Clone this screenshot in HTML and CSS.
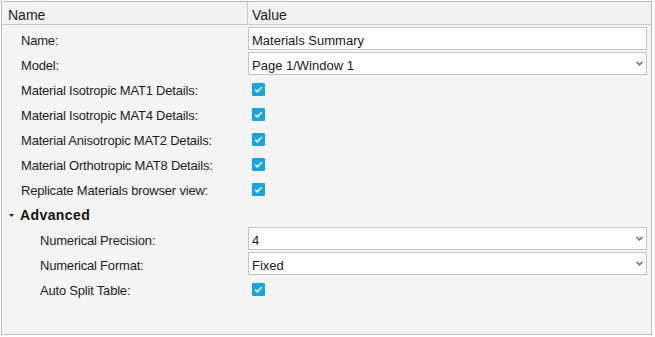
FILE: index.html
```html
<!DOCTYPE html>
<html>
<head>
<meta charset="utf-8">
<link rel="stylesheet" href="styles.css">
</head>
<body>
<div class="panel">
  <div class="head">
    <div class="hcell hname">Name</div>
    <div class="hcell hvalue">Value</div>
  </div>
  <div class="rows">
    <div class="row">
      <div class="label">Name:</div>
      <div class="val"><div class="field">Materials Summary</div></div>
    </div>
    <div class="row">
      <div class="label">Model:</div>
      <div class="val"><div class="field select"><span>Page 1/Window 1</span><svg class="arrow" width="7" height="5" viewBox="0 0 7 5"><polyline points="0.5,0.8 3.5,3.8 6.5,0.8" fill="none" stroke="#7a7a7a" stroke-width="1.8"/></svg></div></div>
    </div>
    <div class="row">
      <div class="label">Material Isotropic MAT1 Details:</div>
      <div class="val"><span class="check"><svg width="13" height="13" viewBox="0 0 13 13"><polyline points="3.2,6.8 5.3,8.8 9.8,4.3" fill="none" stroke="#fff" stroke-width="1.6"/></svg></span></div>
    </div>
    <div class="row">
      <div class="label">Material Isotropic MAT4 Details:</div>
      <div class="val"><span class="check"><svg width="13" height="13" viewBox="0 0 13 13"><polyline points="3.2,6.8 5.3,8.8 9.8,4.3" fill="none" stroke="#fff" stroke-width="1.6"/></svg></span></div>
    </div>
    <div class="row">
      <div class="label">Material Anisotropic MAT2 Details:</div>
      <div class="val"><span class="check"><svg width="13" height="13" viewBox="0 0 13 13"><polyline points="3.2,6.8 5.3,8.8 9.8,4.3" fill="none" stroke="#fff" stroke-width="1.6"/></svg></span></div>
    </div>
    <div class="row">
      <div class="label">Material Orthotropic MAT8 Details:</div>
      <div class="val"><span class="check"><svg width="13" height="13" viewBox="0 0 13 13"><polyline points="3.2,6.8 5.3,8.8 9.8,4.3" fill="none" stroke="#fff" stroke-width="1.6"/></svg></span></div>
    </div>
    <div class="row">
      <div class="label">Replicate Materials browser view:</div>
      <div class="val"><span class="check"><svg width="13" height="13" viewBox="0 0 13 13"><polyline points="3.2,6.8 5.3,8.8 9.8,4.3" fill="none" stroke="#fff" stroke-width="1.6"/></svg></span></div>
    </div>
    <div class="row group">
      <div class="label glabel"><svg class="tri" width="5" height="3" viewBox="0 0 5 3"><polygon points="0,0 5,0 2.5,3" fill="#222"/></svg>Advanced</div>
      <div class="val"></div>
    </div>
    <div class="row">
      <div class="label sub">Numerical Precision:</div>
      <div class="val"><div class="field select"><span>4</span><svg class="arrow" width="7" height="5" viewBox="0 0 7 5"><polyline points="0.5,0.8 3.5,3.8 6.5,0.8" fill="none" stroke="#7a7a7a" stroke-width="1.8"/></svg></div></div>
    </div>
    <div class="row">
      <div class="label sub">Numerical Format:</div>
      <div class="val"><div class="field select"><span>Fixed</span><svg class="arrow" width="7" height="5" viewBox="0 0 7 5"><polyline points="0.5,0.8 3.5,3.8 6.5,0.8" fill="none" stroke="#7a7a7a" stroke-width="1.8"/></svg></div></div>
    </div>
    <div class="row">
      <div class="label sub">Auto Split Table:</div>
      <div class="val"><span class="check"><svg width="13" height="13" viewBox="0 0 13 13"><polyline points="3.2,6.8 5.3,8.8 9.8,4.3" fill="none" stroke="#fff" stroke-width="1.6"/></svg></span></div>
    </div>
  </div>
</div>
</body>
</html>
```
FILE: styles.css
```css
html, body {
  margin: 0;
  padding: 0;
  background: #ffffff;
}
body {
  font-family: "Liberation Sans", Arial, sans-serif;
  color: #222222;
}
.panel {
  box-sizing: border-box;
  margin: 1px 0 0 1px;
  width: 651px;
  height: 334px;
  border: 1px solid #bdbdbd;
  background: #f5f5f5;
}
.head {
  display: grid;
  grid-template-columns: 246px 1fr;
  height: 23px;
  box-sizing: border-box;
  border-bottom: 1px solid #c9c9c9;
  background: #f3f3f3;
}
.hcell {
  font-size: 14px;
  line-height: 17px;
  padding-top: 5px;
  box-sizing: border-box;
  height: 22px;
}
.hname {
  padding-left: 6px;
  border-right: 1px solid #c9c9c9;
}
.hvalue {
  padding-left: 4px;
}
.row {
  display: grid;
  grid-template-columns: 246px 1fr;
  height: 25px;
}
.label {
  font-size: 13px;
  line-height: 19px;
  padding-top: 6px;
  padding-left: 19px;
  white-space: nowrap;
  letter-spacing: -0.2px;
  color: #1c1c1c;
}
.label.sub {
  padding-left: 38px;
}
.glabel {
  display: flex;
  align-items: flex-start;
  font-weight: bold;
  font-size: 14px;
  padding-left: 6px;
  letter-spacing: 0.4px;
  color: #111111;
}
.tri {
  margin-top: 8px;
  margin-left: 1px;
  margin-right: 6px;
}
.val {
  padding-right: 4px;
}
.field {
  box-sizing: border-box;
  margin-top: 2px;
  height: 23px;
  border: 1px solid #c4c4c4;
  background: #ffffff;
  font-size: 13px;
  line-height: 18px;
  padding: 4px 3px 0 3px;
  color: #1a1a1a;
}
.select {
  display: flex;
  justify-content: space-between;
}
.arrow {
  margin-top: 4px;
  margin-right: 0px;
}
.check {
  display: block;
  width: 13px;
  height: 13px;
  margin-top: 8px;
  margin-left: 4px;
  background: #14a6e6;
  border-radius: 1px;
}
.check svg {
  display: block;
}
```
